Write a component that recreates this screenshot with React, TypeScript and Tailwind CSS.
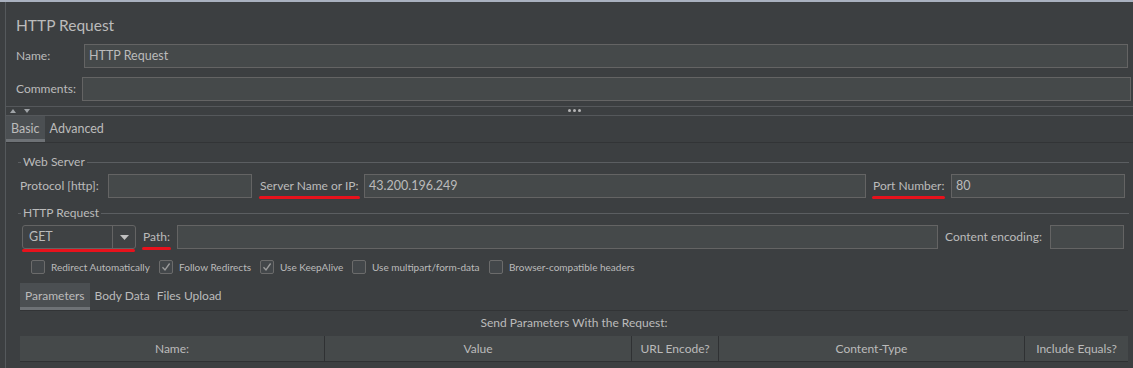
import React from 'react'

const font = { fontFamily: 'Lato, "Open Sans", sans-serif' }

function Field({ className, value }: { className: string; value?: string }) {
  return (
    <div
      className={`h-[24px] shrink-0 bg-[#45494a] border border-[#646464] text-[12.5px] leading-[22px] px-[4px] text-[#bbbbbb] whitespace-nowrap ${className}`}
    >
      {value}
    </div>
  )
}

function Underlined({ children, className }: { children: React.ReactNode; className?: string }) {
  return (
    <span className={`relative shrink-0 whitespace-nowrap ${className ?? ''}`}>
      <span className="relative inline-block">
        {children}
        <span className="absolute left-[-1px] right-[-1px] bottom-[-4px] h-[3px] rounded-full bg-[#e8121c]" />
      </span>
    </span>
  )
}

function GroupTitle({ title }: { title: string }) {
  return (
    <div className="flex items-center h-[16px]">
      <span className="w-[3px] h-px bg-[#5b5e61]" />
      <span className="px-[2px] text-[12px] text-[#bbbbbb]">{title}</span>
      <span className="flex-1 h-px bg-[#5b5e61]" />
    </div>
  )
}

function Check({ label, checked, className }: { label: string; checked?: boolean; className?: string }) {
  return (
    <div className={`flex items-center shrink-0 ${className ?? ''}`}>
      <span className="w-[14px] h-[14px] border border-[#6b6b6b] rounded-[2px] bg-[#43474a] flex items-center justify-center">
        {checked && (
          <svg width="10" height="10" viewBox="0 0 10 10">
            <path d="M1.5 5.2 L4 8 L8.6 1.5" fill="none" stroke="#9c9c9c" strokeWidth="1.3" />
          </svg>
        )}
      </span>
      <span className="ml-[6px] text-[10px] text-[#bbbbbb] whitespace-nowrap">{label}</span>
    </div>
  )
}

export default function App() {
  const columns = [
    { name: 'Name:', w: 'w-[305px]' },
    { name: 'Value', w: 'w-[307px]' },
    { name: 'URL Encode?', w: 'w-[87px]' },
    { name: 'Content-Type', w: 'w-[306px]' },
    { name: 'Include Equals?', w: 'flex-1' },
  ]

  return (
    <div className="w-[1133px] h-[368px] overflow-hidden bg-[#3c3f41] text-[#bbbbbb]" style={font}>
      <div className="h-[2px] bg-[#a9b1bf]" />
      <div className="ml-[5px] h-[366px] border-l border-[#55595c]">
        {/* Title */}
        <div className="pl-[10px] pt-[12px] h-[34px] text-[15.5px] leading-[22px]">HTTP Request</div>

        {/* Name */}
        <div className="flex items-center mt-[8px] pl-[10px] pr-[5px] text-[12px]">
          <span className="w-[68px]">Name:</span>
          <Field className="flex-1" value="HTTP Request" />
        </div>

        {/* Comments */}
        <div className="flex items-center mt-[9px] pl-[10px] pr-[2px] text-[12px]">
          <span className="w-[66px]">Comments:</span>
          <Field className="flex-1" />
        </div>

        {/* Splitter */}
        <div className="mt-[5px] h-[10px] border-y border-[#55585b] flex items-center relative">
          <div className="flex items-center gap-[8px] pl-[4px]">
            <svg width="6" height="4" viewBox="0 0 6 4">
              <path d="M0 4 L3 0 L6 4 Z" fill="#a0a4a8" />
            </svg>
            <svg width="6" height="4" viewBox="0 0 6 4">
              <path d="M0 0 L3 4 L6 0 Z" fill="#a0a4a8" />
            </svg>
          </div>
          <div className="absolute left-[562px] top-[2px] flex gap-[2px]">
            <span className="w-[3px] h-[3px] rounded-full bg-[#b5b5b5]" />
            <span className="w-[3px] h-[3px] rounded-full bg-[#b5b5b5]" />
            <span className="w-[3px] h-[3px] rounded-full bg-[#b5b5b5]" />
          </div>
        </div>

        {/* Tabs */}
        <div className="flex h-[27px] border-b border-[#323436] text-[12.5px]">
          <div className="px-[5px] bg-[#4b4f52] border-b-[3px] border-[#6e7276] leading-[26px]">Basic</div>
          <div className="px-[5px] leading-[26px]">Advanced</div>
        </div>

        {/* Web Server */}
        <div className="ml-[12px] mr-[4px] mt-[11px]">
          <GroupTitle title="Web Server" />
          <div className="flex items-center mt-[4px] text-[12px] whitespace-nowrap">
            <span className="ml-[2px] w-[88px] shrink-0">Protocol [http]:</span>
            <Field className="w-[144px]" />
            <Underlined className="ml-[8px] w-[104px]">Server Name or IP:</Underlined>
            <Field className="w-[502px]" value="43.200.196.249" />
            <Underlined className="ml-[7px] w-[78px]">Port Number:</Underlined>
            <Field className="w-[174px]" value="80" />
          </div>

          <div className="mt-[7px]">
            <GroupTitle title="HTTP Request" />
          </div>
          <div className="flex items-center mt-[4px] text-[12px] whitespace-nowrap">
            <span className="relative ml-[4px] shrink-0">
              <div className="flex w-[114px] h-[24px] border border-[#646464] rounded-[3px] bg-[#3f4244]">
                <span className="flex-1 pl-[6px] leading-[22px] text-[12.5px]">GET</span>
                <span className="w-[23px] border-l border-[#646464] flex items-center justify-center">
                  <svg width="9" height="5" viewBox="0 0 9 5">
                    <path d="M0 0 L9 0 L4.5 5 Z" fill="#c0c0c0" />
                  </svg>
                </span>
              </div>
              <span className="absolute left-0 right-[1px] bottom-[-3px] h-[3px] rounded-full bg-[#e8121c]" />
            </span>
            <Underlined className="ml-[7px] w-[34px]">Path:</Underlined>
            <Field className="w-[761px]" />
            <span className="ml-[7px] w-[105px] shrink-0">Content encoding:</span>
            <Field className="w-[74px]" />
          </div>

          <div className="flex items-center mt-[11px] h-[14px]">
            <Check className="ml-[13px] w-[128px]" label="Redirect Automatically" />
            <Check className="w-[101px]" label="Follow Redirects" checked />
            <Check className="w-[92px]" label="Use KeepAlive" checked />
            <Check className="w-[137px]" label="Use multipart/form-data" />
            <Check label="Browser-compatible headers" />
          </div>
        </div>

        {/* Sub tabs */}
        <div className="ml-[14px] mr-[5px] mt-[9px] flex h-[28px] border-b border-[#323436] text-[12px]">
          <div className="px-[5px] bg-[#4b4f52] border-b-[3px] border-[#6e7276] leading-[26px]">Parameters</div>
          <div className="px-[5px] leading-[26px]">Body Data</div>
          <div className="px-[2px] leading-[26px]">Files Upload</div>
        </div>

        <div className="ml-[14px] mr-[5px] text-center text-[12px] leading-[24px] h-[25px]">
          Send Parameters With the Request:
        </div>

        <div className="ml-[14px] mr-[5px] flex h-[26px] bg-[#45494a] border-b border-[#2f3133] text-[12px]">
          {columns.map((c, i) => (
            <div
              key={c.name}
              className={`${c.w} text-center leading-[25px] ${i < columns.length - 1 ? 'border-r border-[#2f3133]' : ''}`}
            >
              {c.name}
            </div>
          ))}
        </div>
      </div>
    </div>
  )
}
